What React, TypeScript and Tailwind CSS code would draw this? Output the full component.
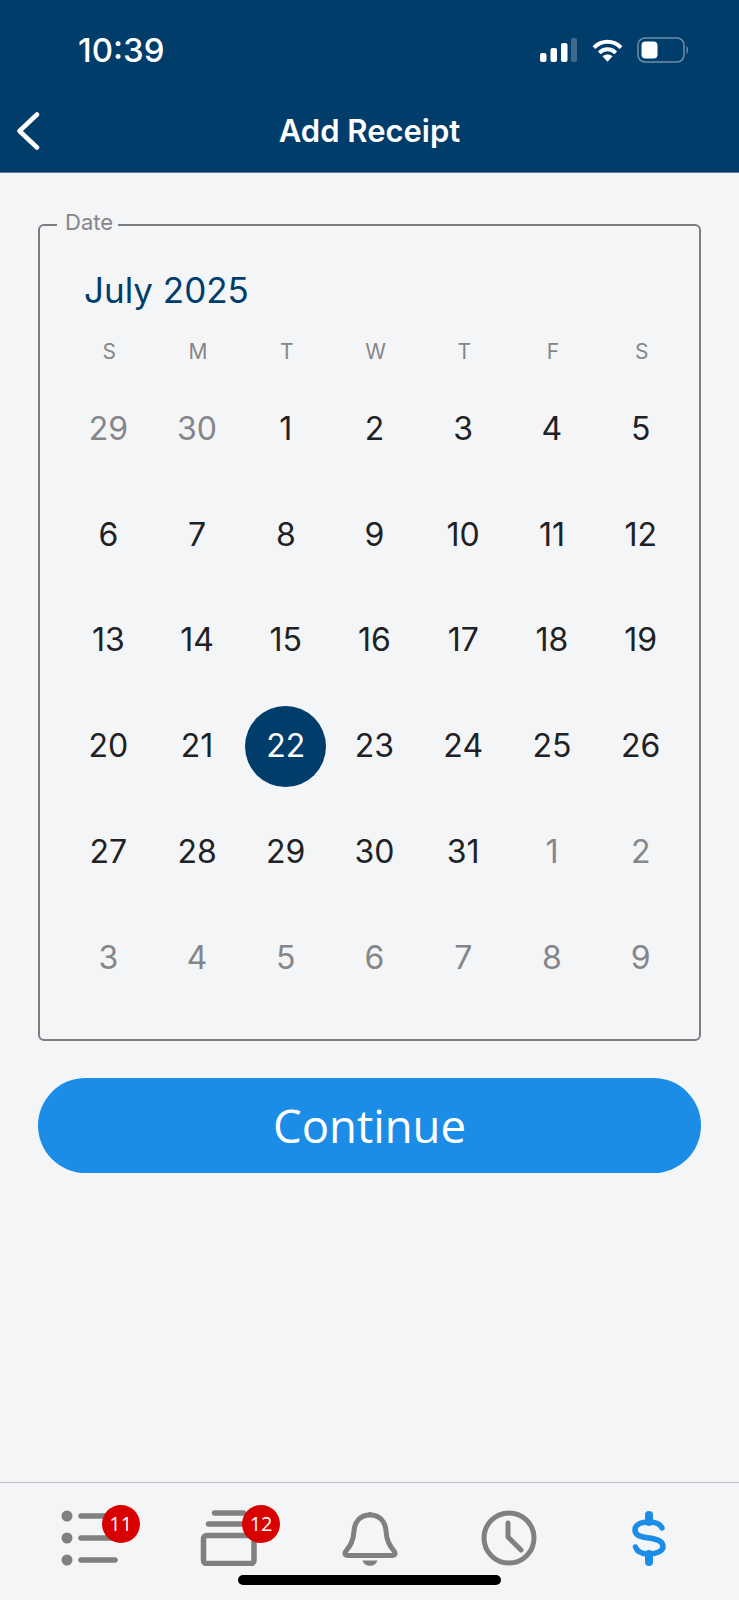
const inter = "font-['Inter',sans-serif]";

const weekdays = ["S", "M", "T", "W", "T", "F", "S"];

const days: { n: number; muted?: boolean; selected?: boolean }[] = [
  { n: 29, muted: true },
  { n: 30, muted: true },
  ...Array.from({ length: 31 }, (_, i) => ({ n: i + 1, selected: i + 1 === 22 })),
  ...[1, 2, 3, 4, 5, 6, 7, 8, 9].map((n) => ({ n, muted: true })),
];

function StatusIcons() {
  return (
    <div className="flex items-center gap-[15px]">
      <svg width="37" height="24" viewBox="0 0 37 24" fill="#fff">
        <rect x="0" y="15" width="6.5" height="9" rx="2" />
        <rect x="10.5" y="10" width="6.5" height="14" rx="2" />
        <rect x="21" y="5" width="6.5" height="19" rx="2" />
        <rect x="31" y="0" width="6" height="24" rx="2" fill="#41698c" />
      </svg>
      <svg width="31" height="24" viewBox="0 0 32 24" fill="none" stroke="#fff" strokeWidth="4">
        <path d="M2 9.5 C10 1.5 22 1.5 30 9.5" />
        <path d="M7.5 15 C12.5 10 19.5 10 24.5 15" />
        <path d="M16 24 L10.8 18.5 C13.8 16 18.2 16 21.2 18.5 Z" fill="#fff" stroke="none" />
      </svg>
      <svg width="52" height="26" viewBox="0 0 52 26" fill="none" className="ml-[-1px]">
        <rect x="1" y="1" width="46" height="24" rx="7" stroke="#6f8fab" strokeWidth="1.5" />
        <rect x="4.5" y="4.5" width="16" height="17" rx="4" fill="#fff" />
        <path d="M49.5 9 C51.5 10 51.5 16 49.5 17 Z" fill="#6f8fab" />
      </svg>
    </div>
  );
}

function Badge({ count, className }: { count: number; className: string }) {
  return (
    <span className={`absolute top-[-5px] flex h-[38px] w-[38px] items-center justify-center rounded-full bg-[#d90000] text-[20px] text-white font-['Open_Sans',sans-serif] ${className}`}>
      {count}
    </span>
  );
}

function TabBar() {
  return (
    <nav className="flex h-[118px] border-t border-[#bdbec1] px-[21px] pt-[27px]">
      <div className="flex w-[140px] justify-center">
        <div className="relative h-[56px] w-[60px]">
          <svg width="60" height="56" viewBox="0 0 60 56" fill="#808080">
            <circle cx="6" cy="6" r="5.5" />
            <circle cx="6" cy="28" r="5.5" />
            <circle cx="6" cy="50" r="5.5" />
            <g stroke="#808080" strokeWidth="5.5" strokeLinecap="round">
              <path d="M20 6 H52" />
              <path d="M20 28 H52" />
              <path d="M20 50 H54" />
            </g>
          </svg>
          <Badge count={11} className="left-[41px]" />
        </div>
      </div>
      <div className="flex w-[140px] justify-center">
        <div className="relative h-[56px] w-[60px]">
          <svg width="60" height="56" viewBox="0 0 60 56" fill="none" stroke="#808080" strokeWidth="5.5" strokeLinecap="round">
            <path d="M14.5 3 H43.5" />
            <path d="M8.5 14 H46" />
            <rect x="3.5" y="25.5" width="50.5" height="28" rx="3" />
          </svg>
          <Badge count={12} className="left-[42px]" />
        </div>
      </div>
      <div className="flex w-[140px] justify-center">
        <svg width="60" height="56" viewBox="0 0 60 56" fill="none" stroke="#808080" strokeWidth="5" strokeLinejoin="round" strokeLinecap="round">
          <path d="M30 5 C20 5 14.5 12 14 21 C13.5 31 10 36 6 41 C4 43.5 5 45.5 8 45.5 H52 C55 45.5 56 43.5 54 41 C50 36 46.5 31 46 21 C45.5 12 40 5 30 5 Z" />
          <circle cx="30" cy="4.5" r="2.5" fill="#808080" stroke="none" />
          <path d="M22.5 50.5 H37.5 C35.5 57.5 24.5 57.5 22.5 50.5 Z" fill="#808080" stroke="none" />
        </svg>
      </div>
      <div className="flex w-[140px] justify-center">
        <svg width="60" height="56" viewBox="0 0 60 56" fill="none" stroke="#808080" strokeWidth="5" strokeLinecap="round" strokeLinejoin="round">
          <circle cx="30" cy="28" r="25" />
          <path d="M29 13 V27 L42 40" />
        </svg>
      </div>
      <div className="flex w-[140px] justify-center">
        <svg width="60" height="56" viewBox="0 0 60 56" fill="none" stroke="#1c8de6" strokeWidth="5.5" strokeLinecap="round">
          <path d="M44 18 C42 13 37 12 31 12 C23 12 17 14.5 17 20 C17 26 24 27 31 28 C39 29 45 31 45 36.5 C45 41 39 44 31 44 C25 44 19 42 17.5 37" />
          <path d="M31 5 V12" strokeWidth="8" />
          <path d="M31 44 V52" strokeWidth="8" />
        </svg>
      </div>
    </nav>
  );
}

export default function App() {
  return (
    <div className={`relative flex h-[1600px] w-[739px] flex-col overflow-hidden bg-[#f4f5f7] ${inter}`}>
      <header className="flex h-[173px] flex-col border-b border-[#5d7f9c] bg-[#003d6b] text-white">
        <div className="flex h-[99px] items-center justify-between pl-[78px] pr-[50px]">
          <span className="text-[33px] font-medium leading-[44px]">10:39</span>
          <StatusIcons />
        </div>
        <div className="flex items-center pl-[16px] pt-[10px]">
          <svg width="24" height="38" viewBox="0 0 24 38" fill="none" stroke="#fff" strokeWidth="4.5" strokeLinecap="round" strokeLinejoin="round">
            <path d="M21 2.5 L3.5 19 L21 35.5" />
          </svg>
          <h1 className="ml-[-40px] flex-1 text-center text-[31px] font-semibold leading-[44px]">Add Receipt</h1>
        </div>
      </header>

      <main className="flex-1 px-[38px] pt-[36px]">
        <fieldset className="h-[832px] rounded-[6px] border-2 border-[#7d7d80]">
          <legend className="ml-[17px] pb-[6px] pl-[8px] pr-[5px] text-[22px] leading-[26px] text-[#858689]">Date</legend>
          <div className="pl-[24px] pr-[14px]">
            <p className="ml-[20px] mt-[27px] text-[35px] leading-[44px] text-[#003d6b]">July 2025</p>
            <div className="-mr-[1px] ml-[1px] mt-[27px] grid grid-cols-7 text-center text-[21px] leading-[26px] text-[#858689]">
              {weekdays.map((d, i) => (
                <span key={i}>{d}</span>
              ))}
            </div>
            <div className="mt-[11px] grid grid-cols-7 auto-rows-[105.8px] text-center text-[32px]">
              {days.map((d, i) => (
                <div key={i} className="flex items-center justify-center">
                  <span
                    className={`flex h-[81px] w-[81px] items-center justify-center rounded-full ${
                      d.selected ? "bg-[#003d6b] text-white" : d.muted ? "text-[#858689]" : "text-[#202124]"
                    }`}
                  >
                    {d.n}
                  </span>
                </div>
              ))}
            </div>
          </div>
        </fieldset>
        <button
          type="button"
          className="mt-[37px] h-[95px] w-[663px] rounded-full bg-[#1c8de6] text-[45.5px] text-white font-['Open_Sans',sans-serif]"
        >
          Continue
        </button>
      </main>

      <TabBar />
      <div className="absolute bottom-[15px] left-[238px] h-[10px] w-[263px] rounded-full bg-black" />
    </div>
  );
}
